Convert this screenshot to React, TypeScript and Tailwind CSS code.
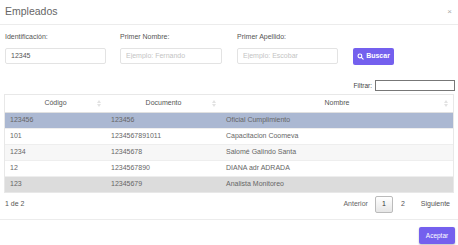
import React from 'react';

const rows = [
    { codigo: '123456', documento: '123456', nombre: 'Oficial Cumplimiento', bg: 'bg-[#abb8d2]' },
    { codigo: '101', documento: '1234567891011', nombre: 'Capacitacion Coomeva', bg: 'bg-white' },
    { codigo: '1234', documento: '12345678', nombre: 'Salomé Galindo Santa', bg: 'bg-[#f7f7f7]' },
    { codigo: '12', documento: '1234567890', nombre: 'DIANA adr ADRADA', bg: 'bg-white' },
    { codigo: '123', documento: '12345679', nombre: 'Analista Monitoreo', bg: 'bg-[#dcdcdc]' },
];

const SortIcon: React.FC = () => (
    <svg width="4" height="7" viewBox="0 0 4 7" className="absolute right-[5px] top-[5px]">
        <path d="M2 0 L4 3 L0 3 Z" fill="#e2e2e2" />
        <path d="M0 4 L4 4 L2 7 Z" fill="#e2e2e2" />
    </svg>
);

const App: React.FC = () => {
    return (
        <div className="h-[245px] w-[458px] overflow-hidden bg-white font-['Liberation_Sans',Arial,sans-serif] text-[#666]">
            {/* header */}
            <div className="flex h-[25px] items-center justify-between border-b border-[#ececec] pl-[5px] pr-[6px]">
                <h2 className="text-[10.5px] text-[#666]">Empleados</h2>
                <span className="text-[8px] leading-none text-[#aaa]">×</span>
            </div>

            {/* search form */}
            <div className="flex items-end px-[5px] pt-[7px]">
                <div className="w-[101px]">
                    <label className="block text-[7px] leading-[9px] text-[#555]">Identificación:</label>
                    <input
                        defaultValue="12345"
                        className="mt-[4px] h-[16px] w-full rounded-[2px] border border-[#e3e3e3] px-[5px] text-[7px] text-[#555] outline-none"
                    />
                </div>
                <div className="ml-[14px] w-[102px]">
                    <label className="block text-[7px] leading-[9px] text-[#555]">Primer Nombre:</label>
                    <input
                        placeholder="Ejemplo: Fernando"
                        className="mt-[4px] h-[16px] w-full rounded-[2px] border border-[#e3e3e3] px-[5px] text-[7px] outline-none placeholder:text-[#c4c4c4]"
                    />
                </div>
                <div className="ml-[15px] w-[101px]">
                    <label className="block text-[7px] leading-[9px] text-[#555]">Primer Apellido:</label>
                    <input
                        placeholder="Ejemplo: Escobar"
                        className="mt-[4px] h-[16px] w-full rounded-[2px] border border-[#e3e3e3] px-[5px] text-[7px] outline-none placeholder:text-[#c4c4c4]"
                    />
                </div>
                <button className="ml-[15px] flex h-[17px] w-[41px] items-center justify-center gap-[2px] rounded-[2px] bg-[#7460ee] text-[7px] font-bold text-white">
                    <svg width="7" height="7" viewBox="0 0 24 24" fill="none" stroke="white" strokeWidth="4" strokeLinecap="round">
                        <circle cx="10" cy="10" r="6.5" />
                        <path d="M15 15 L21 21" />
                    </svg>
                    Buscar
                </button>
            </div>

            {/* filter */}
            <div className="mt-[15px] flex items-center justify-end gap-[3px] pr-[3px]">
                <span className="text-[6.5px] text-[#444]">Filtrar:</span>
                <input className="h-[11px] w-[80px] border border-[#777] outline-none" />
            </div>

            {/* table */}
            <div className="mx-[4px] mt-[3px] border border-[#e8e8e8]">
                <table className="w-full table-fixed border-collapse text-[7px]">
                    <colgroup>
                        <col className="w-[101px]" />
                        <col className="w-[115px]" />
                        <col />
                    </colgroup>
                    <thead>
                        <tr className="h-[17px] border-b border-[#e0e0e0] text-[#555]">
                            <th className="relative font-normal">Código<SortIcon /></th>
                            <th className="relative font-normal">Documento<SortIcon /></th>
                            <th className="relative font-normal">Nombre<SortIcon /></th>
                        </tr>
                    </thead>
                    <tbody>
                        {rows.map((r) => (
                            <tr key={r.codigo} className={`h-[16px] border-t border-[#eee] ${r.bg}`}>
                                <td className="pl-[5px]">{r.codigo}</td>
                                <td className="pl-[5px]">{r.documento}</td>
                                <td className="pl-[5px]">{r.nombre}</td>
                            </tr>
                        ))}
                    </tbody>
                </table>
            </div>

            {/* pagination */}
            <div className="flex h-[22px] items-center justify-between pl-[5px] pr-[8px] text-[7px] text-[#555]">
                <span>1 de 2</span>
                <div className="flex items-center">
                    <span className="text-[#666]">Anterior</span>
                    <span className="ml-[7px] flex h-[17px] w-[18px] items-center justify-center rounded-[2px] border border-[#bbb] bg-gradient-to-b from-white to-[#e6e6e6] text-[#333]">1</span>
                    <span className="ml-[8px]">2</span>
                    <span className="ml-[16px]">Siguiente</span>
                </div>
            </div>

            {/* footer */}
            <div className="mt-[4px] flex justify-end border-t border-[#ececec] px-[3px] pt-[7px]">
                <button className="h-[17px] w-[36px] rounded-[2px] bg-[#7460ee] text-[6.5px] text-white shadow-[0_1px_2px_rgba(0,0,0,0.25)]">
                    Aceptar
                </button>
            </div>
        </div>
    );
};

export default App;
